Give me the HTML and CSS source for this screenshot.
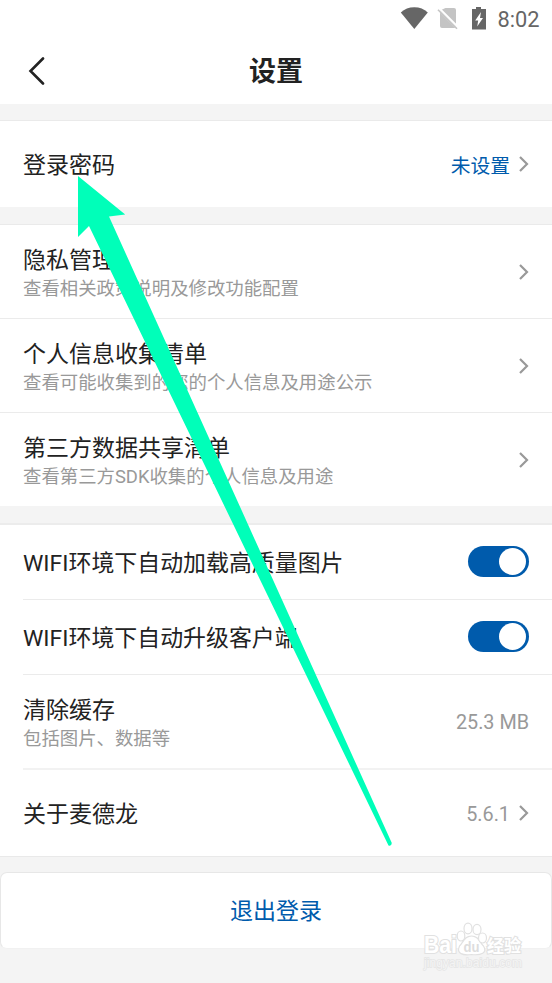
FILE: index.html
```html
<!DOCTYPE html>
<html lang="zh-CN">
<head>
<meta charset="utf-8">
<title>设置</title>
<link rel="stylesheet" href="styles.css">
</head>
<body>
<header class="header">
  <div class="status">
    <svg class="status-icons" width="90" height="26" viewBox="0 0 90 26">
      <path fill="#666" d="M2 12.5Q7.500 7.300 15.500 7.300T29 12.500L15.500 29Z" transform="translate(-1.200 0)"/>
      <path fill="#c4c4c4" d="M45.500 8H54Q56 8 56 10V26L40 10.500ZM40 12.500L55 27.500Q55 28 54 28H42Q40 28 40 26Z"/>
      <path fill="none" stroke="#fff" stroke-width="1.800" d="M39.500 8.500L58.500 27.500"/>
      <path fill="none" stroke="#c4c4c4" stroke-width="1.600" d="M38 9.800L57 28.800"/>
      <path fill="#666" d="M76 7h5v2h5v20.500H72V9h4Z"/>
      <path fill="#fff" d="M81 12L75.200 20.500h3l-1 6 5.800-8.500h-3Z"/>
    </svg>
    <span class="clock">8:02</span>
  </div>
  <div class="nav">
    <svg class="back" width="18" height="28" viewBox="0 0 18 28"><path d="M15 1.500L2.500 14 15 26.500"/></svg>
    <h1>设置</h1>
  </div>
</header>
<main>
  <section class="group login">
    <div class="row"><span class="name">登录密码</span><span class="value link">未设置</span><svg class="chevron" width="10" height="16" viewBox="0 0 10 16"><path d="M1 1l7 7-7 7"/></svg></div>
  </section>
  <section class="group privacy">
    <div class="row"><div class="copy"><div class="name">隐私管理</div><div class="note">查看相关政策说明及修改功能配置</div></div><svg class="chevron" width="10" height="16" viewBox="0 0 10 16"><path d="M1 1l7 7-7 7"/></svg></div>
    <div class="row"><div class="copy"><div class="name">个人信息收集清单</div><div class="note">查看可能收集到的您的个人信息及用途公示</div></div><svg class="chevron" width="10" height="16" viewBox="0 0 10 16"><path d="M1 1l7 7-7 7"/></svg></div>
    <div class="row"><div class="copy"><div class="name">第三方数据共享清单</div><div class="note">查看第三方SDK收集的个人信息及用途</div></div><svg class="chevron" width="10" height="16" viewBox="0 0 10 16"><path d="M1 1l7 7-7 7"/></svg></div>
  </section>
  <section class="group general">
    <div class="row toggle-row"><span class="name">WIFI环境下自动加载高质量图片</span><span class="toggle"></span></div>
    <div class="row toggle-row"><span class="name">WIFI环境下自动升级客户端</span><span class="toggle"></span></div>
    <div class="row cache-row"><div class="copy"><div class="name">清除缓存</div><div class="note">包括图片、数据等</div></div><span class="value">25.3 MB</span></div>
    <div class="row about-row"><span class="name">关于麦德龙</span><span class="value">5.6.1</span><svg class="chevron" width="10" height="16" viewBox="0 0 10 16"><path d="M1 1l7 7-7 7"/></svg></div>
  </section>
  <button class="logout">退出登录</button>
</main>
<svg class="pointer" width="552" height="983" viewBox="0 0 552 983">
  <path d="M78 176L125.200 214.500 109 216.500 391.800 843Q391.500 846.500 388.500 845.500L89 226 78 237Z"/>
</svg>
<svg class="watermark" width="110" height="56" viewBox="0 0 110 56">
  <g class="mark">
    <path d="M51.500 20C44 20 43 27 39.500 30C36 38 43 39.500 51.500 38.500C61 39.500 68 37 63.500 30C60 27 59 20 51.500 20Z"/>
    <ellipse cx="41" cy="20" rx="3.800" ry="5"/>
    <ellipse cx="48" cy="12.500" rx="4" ry="5.400"/>
    <ellipse cx="57" cy="13.500" rx="4" ry="5.200"/>
    <ellipse cx="62.500" cy="22" rx="4" ry="5"/>
    <text class="brand" x="4" y="37" textLength="33" lengthAdjust="spacingAndGlyphs">Bai</text>
    <text class="du" x="43.500" y="36" textLength="16" lengthAdjust="spacingAndGlyphs">du</text>
    <text class="cn" x="67" y="36" textLength="34">经验</text>
  </g>
  <text class="site" x="4" y="51" textLength="98">jingyan.baidu.com</text>
</svg>
</body>
</html>
```
FILE: styles.css
```css
* { box-sizing: border-box; }
body {
  margin: 0;
  height: 983px;
  position: relative;
  overflow: hidden;
  background: #f4f4f4;
  color: #222;
  font-family: Roboto, "Noto Sans CJK SC", sans-serif;
}
.header { height: 104px; background: #fff; }
.status {
  height: 38px;
  padding-right: 12.500px;
  display: flex;
  justify-content: flex-end;
  color: #666;
}
.status-icons { overflow: visible; margin-right: 7px; }
.clock { font-size: 21.800px; line-height: 39px; }
.nav {
  height: 66px;
  display: grid;
  grid-template-columns: 80px 1fr 80px;
  align-items: center;
}
.back { margin-left: 28px; fill: none; stroke: #222; stroke-width: 2.600; stroke-linecap: round; }
h1 { margin: 0; padding-top: 2px; font-size: 27px; line-height: 40px; font-weight: 700; text-align: center; }
.group { background: #fff; border-top: 1px solid #eaeaea; }
.login { margin-top: 16px; height: 87px; }
.privacy { margin-top: 17px; height: 282px; }
.general { margin-top: 17px; height: 334px; border-top: 2px solid #ececec; border-bottom: 1px solid #e9e9e9; }
.row { display: flex; align-items: center; padding-right: 23px; }
.login .row { height: 86px; padding-left: 23px; }
.privacy .row { height: 94px; padding-left: 23px; border-bottom: 1px solid #ebebeb; }
.privacy .row:last-child { height: 93px; border-bottom: 0; }
.general .row { margin-left: 23px; border-bottom: 1px solid #ebebeb; }
.general .toggle-row { height: 75px; }
.general .cache-row { height: 95px; border-bottom: 2px solid #f2f2f2; }
.general .about-row { height: 86px; border-bottom: 0; }
.name { flex: 1; padding-top: 2px; font-size: 23px; line-height: 31px; white-space: nowrap; }
.toggle-row .name { font-size: 22.930px; }
.copy { flex: 1; padding-top: 2px; }
.copy .name { padding-top: 1px; }
.note { font-size: 18.400px; line-height: 26px; color: #999; white-space: nowrap; }
.value { padding-top: 3px; font-size: 19.800px; line-height: 28px; color: #999; white-space: nowrap; }
.link { padding-top: 5px; color: #005bac; }
.chevron { margin-left: 9px; fill: none; stroke: #999; stroke-width: 2.200; }
.toggle {
  width: 61px;
  height: 31px;
  margin-bottom: 1px;
  padding: 2px 3px;
  border-radius: 16px;
  background: #005bac;
  display: flex;
  justify-content: flex-end;
}
.toggle::after { content: ""; width: 27px; height: 27px; border-radius: 50%; background: #fff; }
.logout {
  display: block;
  width: 552px;
  height: 77px;
  margin: 15px 0 0;
  padding: 2px 0 0;
  border: 1px solid #e7e7e7;
  border-bottom-color: #f1f1f1;
  border-radius: 7px;
  background: #fff;
  color: #005bac;
  font: 23px/31px Roboto, "Noto Sans CJK SC", sans-serif;
}
.pointer { position: absolute; inset: 0; fill: #00ffb9; }
.watermark { position: absolute; left: 420px; top: 916px; overflow: visible; }
.mark { fill: #fff; stroke: #e1e1e1; stroke-width: 1.200; }
.mark text { paint-order: stroke; stroke-width: 2.200; font-weight: 700; }
.brand { font-size: 23px; font-family: "Liberation Sans", sans-serif; }
.mark .du { font-size: 15px; font-family: "Liberation Sans", sans-serif; fill: #ddd; stroke: none; }
.cn { font-size: 17px; }
.site { font: 12px "Liberation Sans", sans-serif; fill: #f4f4f4; stroke: #e5e5e5; stroke-width: 1.400; paint-order: stroke; }
```
